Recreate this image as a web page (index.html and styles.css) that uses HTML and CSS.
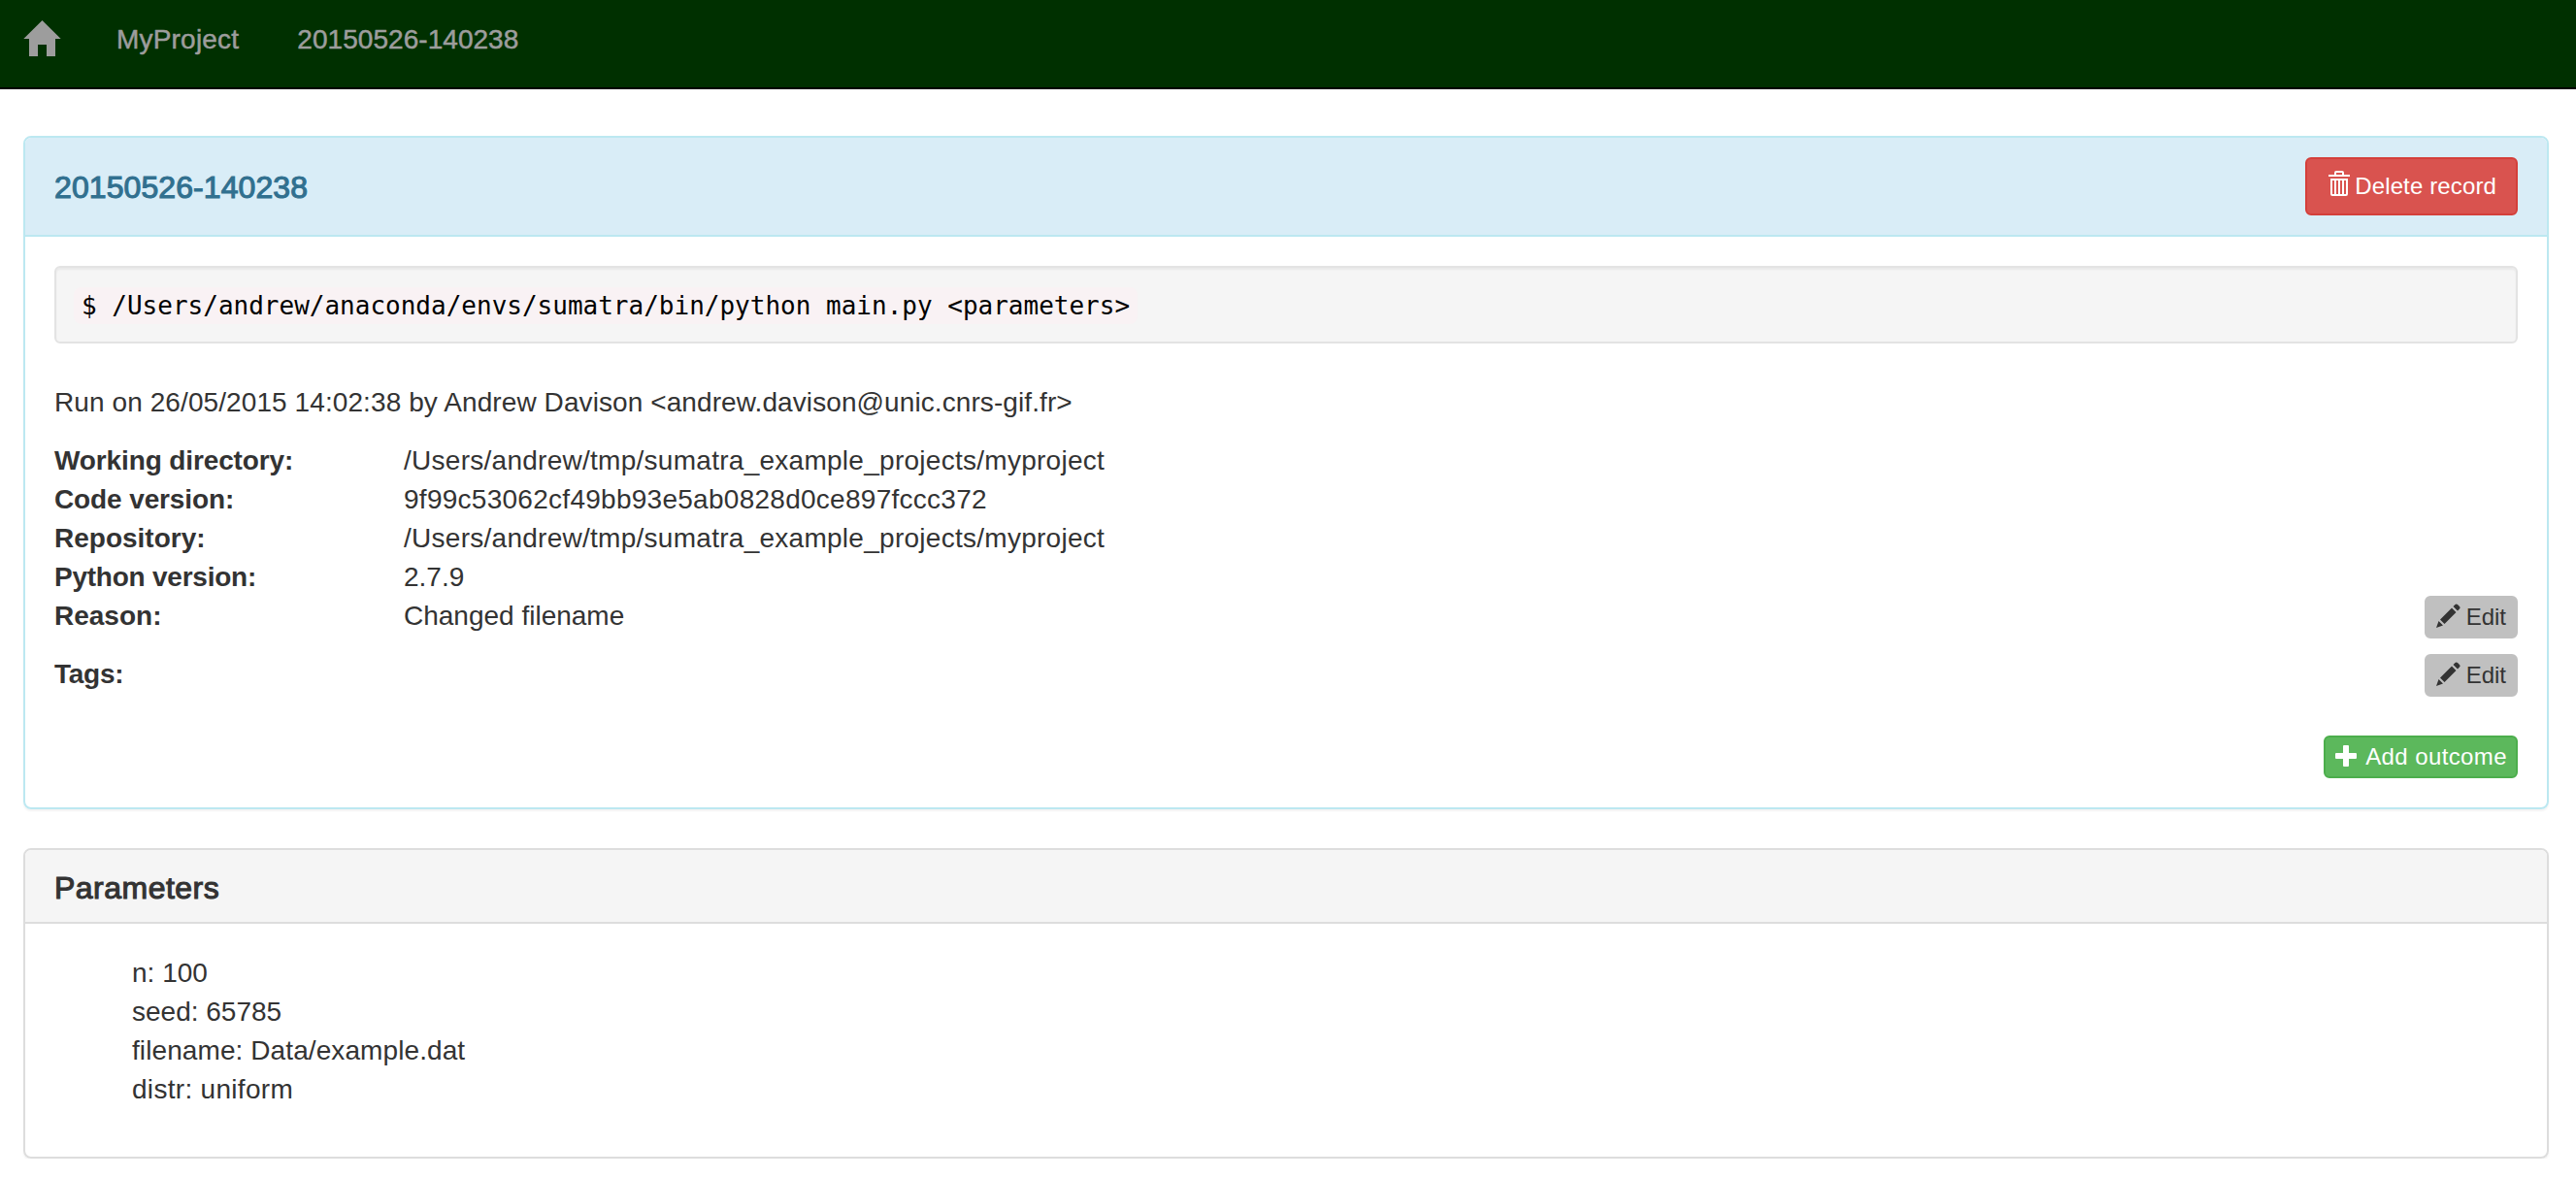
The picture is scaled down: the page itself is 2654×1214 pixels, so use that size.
FILE: index.html
```html
<!DOCTYPE html>
<html lang="en">
<head>
<meta charset="utf-8">
<title>20150526-140238</title>
<link rel="stylesheet" href="styles.css">
</head>
<body>
<nav class="navbar">
  <a class="home" href="#" aria-label="Home"><svg class="icon-home" viewBox="0 0 39 37"><path d="M19.500 0 38.700 19H33V37H24V25H15V37H6V19H.300Z"/></svg></a>
  <a class="nav-link nav-project" href="#">MyProject</a>
  <a class="nav-link" href="#">20150526-140238</a>
</nav>
<main class="content">
  <section class="panel panel-info">
    <header class="panel-heading record-heading">
      <h1 class="panel-title">20150526-140238</h1>
      <button class="btn btn-danger"><svg class="icon-trash" viewBox="0 0 22 26"><path fill-rule="evenodd" d="M6 4V2Q6 0 8 0H14Q16 0 16 2V4H22V6H0V4ZM8 4H14V2H8ZM2 8H20V24Q20 26 18 26H4Q2 26 2 24ZM4 10V24H6V10ZM8 10V24H10V10ZM12 10V24H14V10ZM16 10V24H18V10Z"/></svg><span>Delete record</span></button>
    </header>
    <div class="panel-body">
      <div class="well"><code>$ /Users/andrew/anaconda/envs/sumatra/bin/python main.py &lt;parameters&gt;</code></div>
      <p class="run-info">Run on 26/05/2015 14:02:38 by Andrew Davison &lt;andrew.davison@unic.cnrs-gif.fr&gt;</p>
      <dl class="details">
        <div class="row"><dt>Working directory:</dt><dd class="path">/Users/andrew/tmp/sumatra_example_projects/myproject</dd></div>
        <div class="row"><dt>Code version:</dt><dd class="path">9f99c53062cf49bb93e5ab0828d0ce897fccc372</dd></div>
        <div class="row"><dt class="plain">Repository:</dt><dd class="path">/Users/andrew/tmp/sumatra_example_projects/myproject</dd></div>
        <div class="row"><dt class="tight">Python version:</dt><dd>2.7.9</dd></div>
        <div class="row row-editable"><dt class="plain">Reason:</dt><dd>Changed filename</dd>
          <button class="btn btn-small btn-edit"><svg class="icon-pencil" viewBox="0 0 25 25"><path d="M0 25 2.500 18 7 22.500ZM4 16.500 16 4.500 20.500 9 8.500 21ZM17.500 3 19.500 1Q20.700-.200 22 1L24 3Q25.200 4.300 24 5.500L22 7.500Z"/></svg><span>Edit</span></button></div>
        <div class="row row-editable"><dt class="tight">Tags:</dt><dd></dd>
          <button class="btn btn-small btn-edit"><svg class="icon-pencil" viewBox="0 0 25 25"><path d="M0 25 2.500 18 7 22.500ZM4 16.500 16 4.500 20.500 9 8.500 21ZM17.500 3 19.500 1Q20.700-.200 22 1L24 3Q25.200 4.300 24 5.500L22 7.500Z"/></svg><span>Edit</span></button></div>
      </dl>
      <div class="actions"><button class="btn btn-small btn-success"><svg class="icon-plus" viewBox="0 0 22 22"><path d="M9 0H13Q14 0 14 1V8H21Q22 8 22 9V13Q22 14 21 14H14V21Q14 22 13 22H9Q8 22 8 21V14H1Q0 14 0 13V9Q0 8 1 8H8V1Q8 0 9 0Z"/></svg><span>Add outcome</span></button></div>
    </div>
  </section>
  <section class="panel">
    <header class="panel-heading"><h2 class="panel-title section-title">Parameters</h2></header>
    <div class="panel-body">
      <ul class="parameters">
        <li>n: 100</li>
        <li>seed: 65785</li>
        <li class="filename">filename: Data/example.dat</li>
        <li class="distr">distr: uniform</li>
      </ul>
    </div>
  </section>
</main>
</body>
</html>
```
FILE: styles.css
```css
* { box-sizing: border-box; }
body {
  margin: 0;
  background: #fff;
  color: #333;
  font: 28px/40px "Liberation Sans", Arial, sans-serif;
}
svg { display: block; flex: none; fill: currentColor; }
.navbar {
  display: flex;
  height: 92px;
  padding-left: 24px;
  background: #003000;
  border-bottom: 2px solid #000;
}
.navbar a { color: #9d9d9d; text-decoration: none; }
.home { margin: 21px 57px 0 0; }
.icon-home { width: 39px; height: 37px; }
.nav-link { padding-top: 21px; letter-spacing: 0.05px; -webkit-text-stroke: 0.5px; }
.nav-project { margin-right: 60px; letter-spacing: 0.2px; }
.content { padding: 48px 28px 0 24px; }
.panel {
  margin-bottom: 40px;
  border: 2px solid #ddd;
  border-radius: 8px;
  box-shadow: 0 2px 2px rgba(0, 0, 0, 0.05);
}
.panel:last-child { margin-bottom: 0; }
.panel-heading {
  height: 76px;
  padding: 21px 30px 17px;
  background: #f5f5f5;
  border-bottom: 2px solid #ddd;
  border-radius: 6px 6px 0 0;
}
.panel-title {
  margin: 0;
  font-size: 32px;
  line-height: 36px;
  font-weight: 400;
  letter-spacing: 0.08px;
  -webkit-text-stroke: 1.1px;
}
.section-title { letter-spacing: 0.48px; }
.panel-info, .panel-info .panel-heading { border-color: #bce8f1; }
.record-heading {
  display: flex;
  justify-content: space-between;
  align-items: center;
  height: 102px;
  padding: 20px 30px;
  background: #d9edf7;
  color: #31708f;
}
.record-heading .panel-title { padding-top: 2px; }
.panel-body { padding: 30px; }
.btn {
  display: flex;
  align-items: center;
  justify-content: space-between;
  flex: none;
  height: 60px;
  padding: 0 22px;
  border: 2px solid;
  border-radius: 6px;
  font: 24px/36px "Liberation Sans", Arial, sans-serif;
  white-space: nowrap;
}
.btn-danger { width: 219px; padding-right: 20px; color: #fff; background: #d9534f; border-color: #d43f3a; letter-spacing: 0.13px; }
.btn-small { height: 44px; padding: 0 10px; }
.btn-edit { width: 96px; color: #333; background: #c0c0c0; border-color: #c0c0c0; }
.btn-success { width: 200px; padding-right: 9px; color: #fff; background: #5cb85c; border-color: #4cae4c; letter-spacing: 0.4px; }
.icon-trash { width: 22px; height: 26px; margin-bottom: 6px; }
.icon-pencil { width: 25px; height: 25px; margin-bottom: 3px; }
.icon-plus { width: 22px; height: 22px; margin-bottom: 2px; }
.well {
  height: 80px;
  padding: 19px 18px 17px;
  margin-bottom: 40px;
  background: #f5f5f5;
  border: 2px solid #e3e3e3;
  border-radius: 6px;
  box-shadow: inset 0 2px 2px rgba(0, 0, 0, 0.05);
}
code {
  padding: 4px 8px;
  border-radius: 8px;
  background: #f9f2f4;
  color: #000;
  font: 26px "DejaVu Sans Mono", monospace;
}
.run-info, dt, dd, li { height: 40px; padding-top: 1px; }
.run-info { margin: 0 0 20px; letter-spacing: 0.09px; }
.details { margin: 0; }
.row { display: flex; }
.row-editable { height: 44px; margin-bottom: 16px; }
dt { width: 360px; font-weight: 700; letter-spacing: -0.12px; }
dt.plain { letter-spacing: 0; }
dt.tight { letter-spacing: -0.24px; }
dd { flex: 1; margin: 0; }
.path { letter-spacing: 0.27px; }
.actions { display: flex; justify-content: flex-end; padding-top: 24px; }
.parameters { margin: 0 0 20px; padding: 0 0 0 80px; list-style: none; }
.filename { letter-spacing: 0.09px; }
.distr { letter-spacing: 0.3px; }
```
